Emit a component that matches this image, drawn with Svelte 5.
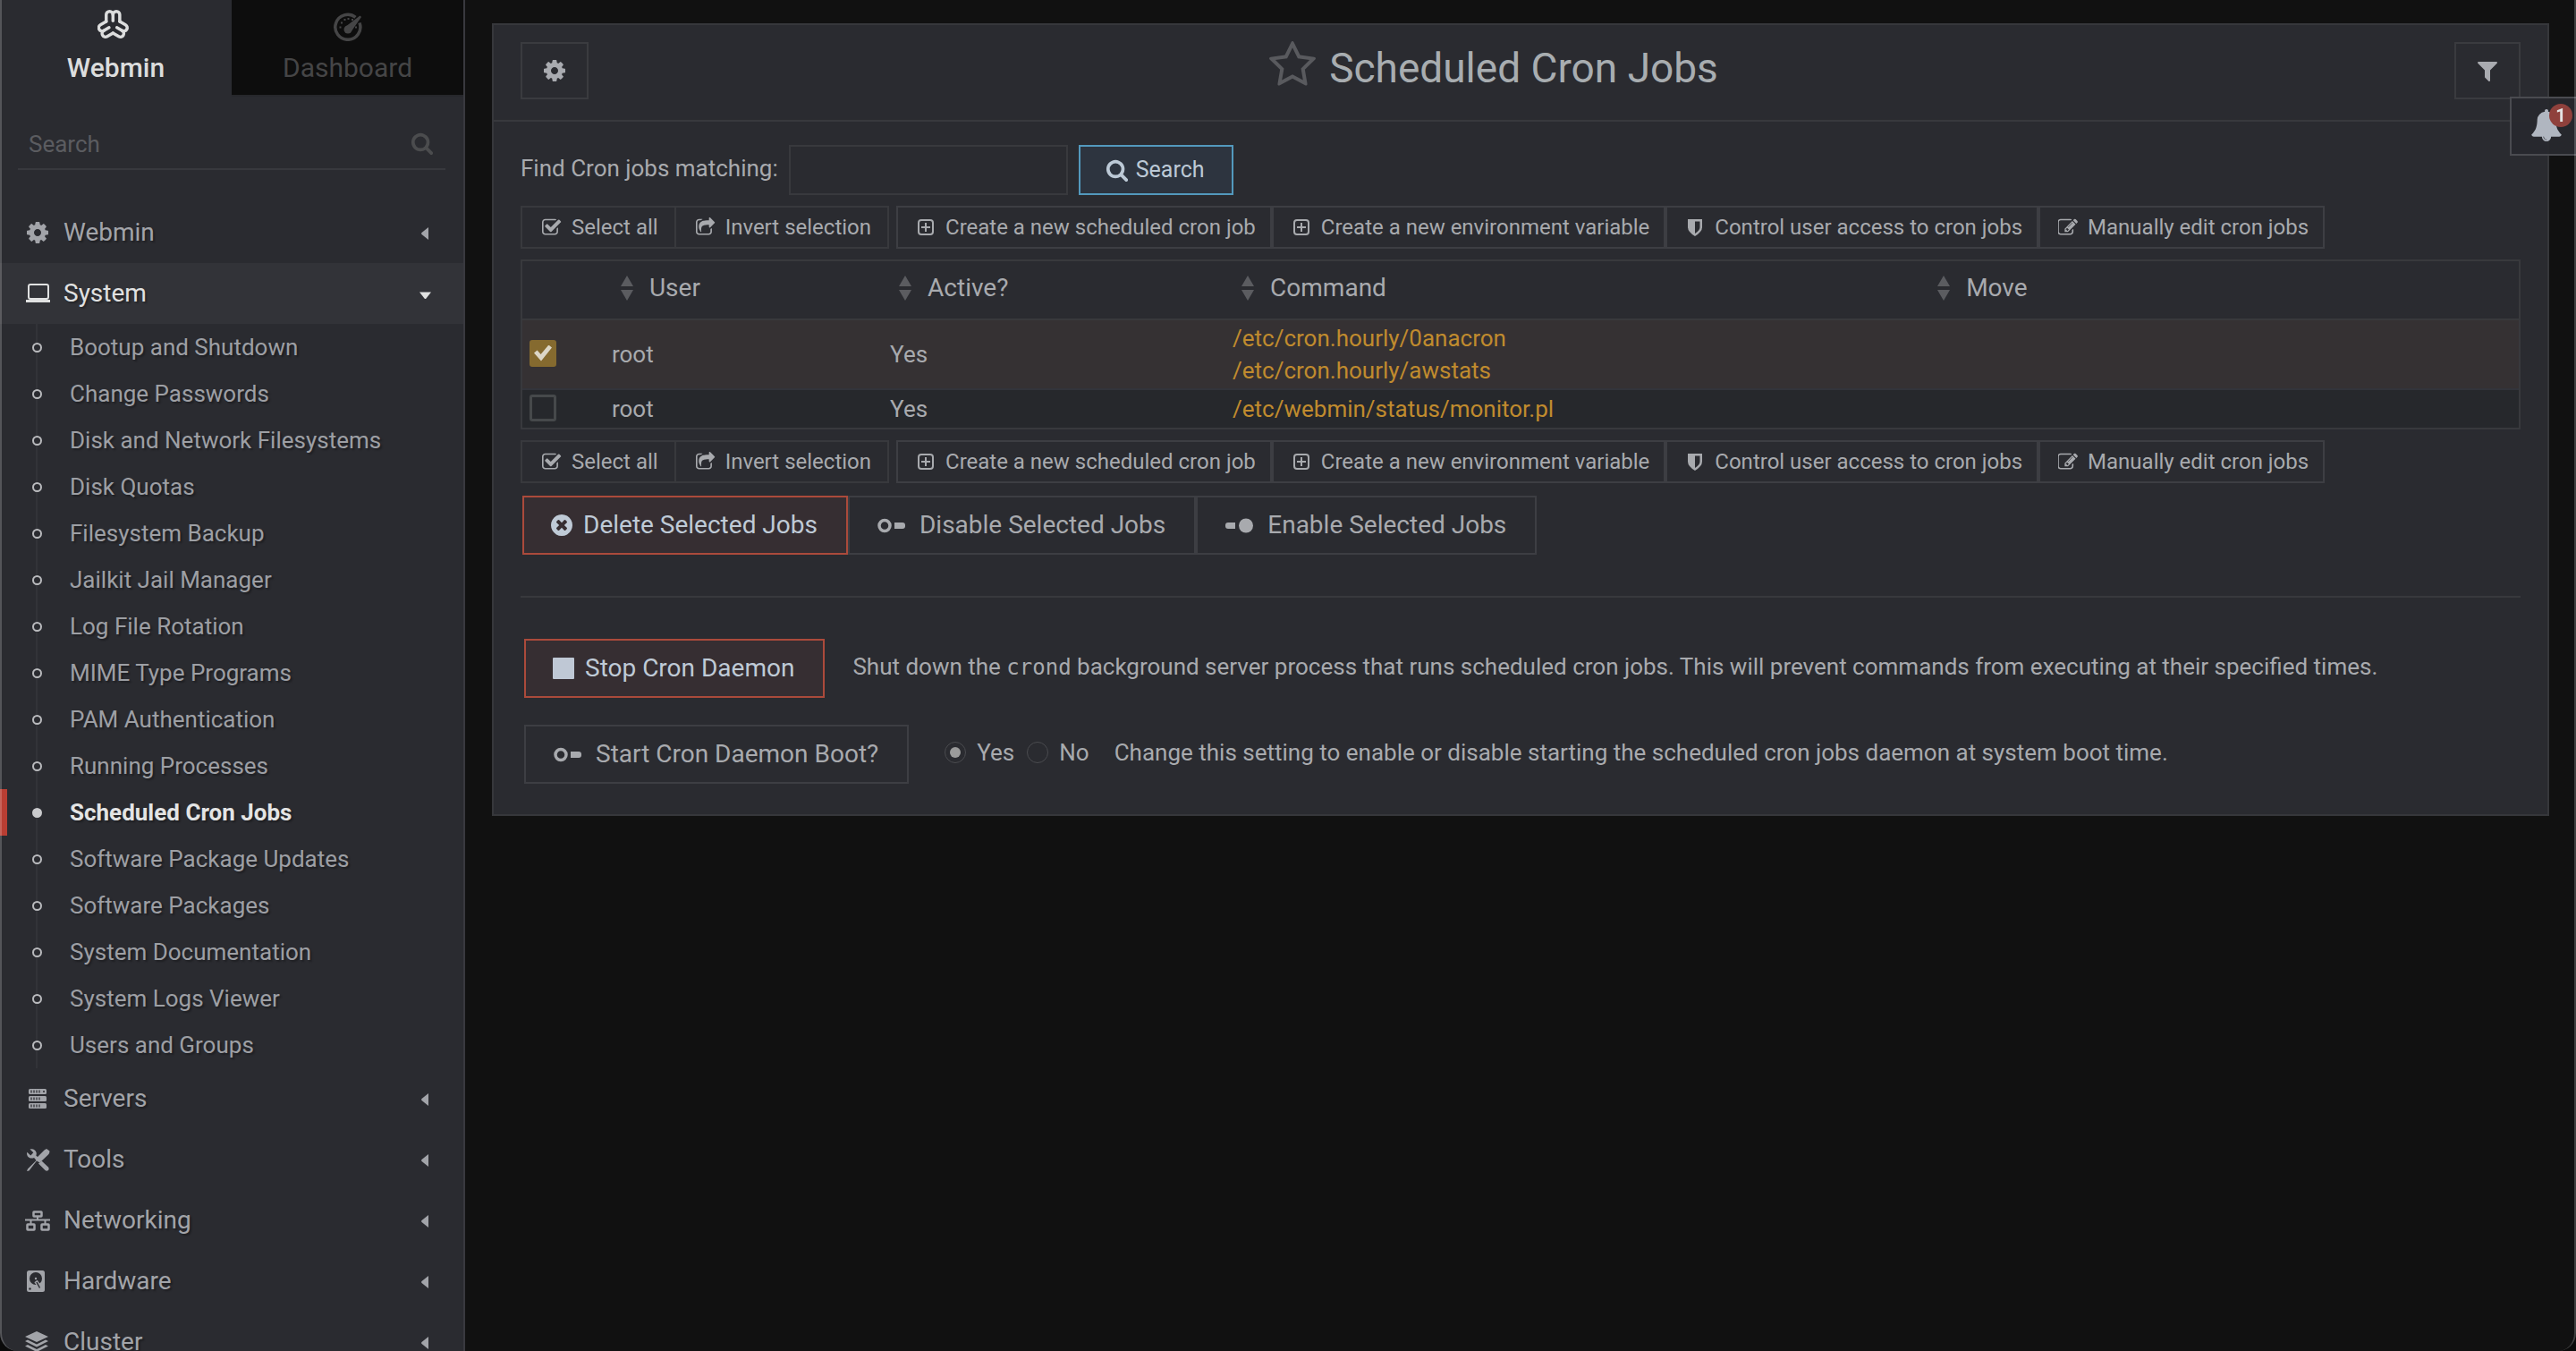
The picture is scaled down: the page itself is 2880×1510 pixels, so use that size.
<script>
  const cog = 'M1152 896q0-106-75-181t-181-75-181 75-75 181 75 181 181 75 181-75 75-181zm512-109v222q0 12-8 23t-20 13l-185 28q-19 54-39 91 35 50 107 138 10 12 10 25t-9 23q-27 37-99 108t-94 71q-12 0-26-9l-138-108q-44 23-91 38-16 136-29 186-7 28-36 28h-222q-14 0-24.5-8.5t-11.5-21.5l-28-184q-49-16-90-37l-141 107q-10 9-25 9-14 0-25-11-126-114-165-168-7-10-7-23 0-12 8-23 15-21 51-66.5t54-70.5q-27-50-41-99l-183-27q-13-2-21-12.5t-8-23.5v-222q0-12 8-23t19-13l186-28q14-46 39-92-40-57-107-138-10-12-10-24 0-10 9-23 26-36 98.500-107.500t94.500-71.500q13 0 26 10l138 107q44-23 91-38 16-136 29-186 7-28 36-28h222q14 0 24.500 8.500t11.500 21.500l28 184q49 16 90 37l142-107q9-9 24-9 13 0 25 10 129 119 165 170 7 8 7 22 0 12-8 23-15 21-51 66.500t-54 70.500q26 50 41 98l183 28q13 2 21 12.500t8 23.500z';
  const glyphs = {
    cog,
    filter: 'M1595 295q17 41-14 70l-493 493v742q0 42-39 59-13 5-25 5-27 0-45-19l-256-256q-19-19-19-45v-486l-493-493q-31-29-14-70 17-39 59-39h1280q42 0 59 39z',
    star: 'M1201 1004l306-297-422-62-189-382-189 382-422 62 306 297-73 421 378-199 377 199zm527-357q0 22-26 48l-363 354 86 500q1 7 1 20 0 50-41 50-19 0-40-12l-449-236-449 236q-22 12-40 12-21 0-31.5-14.5t-10.5-35.5q0-6 2-20l86-500-364-354q-25-27-25-48 0-37 56-46l502-73 225-455q19-41 49-41t49 41l225 455 502 73q56 9 56 46z',
    search: 'M1216 832q0-185-131.5-316.5t-316.5-131.5-316.5 131.5-131.5 316.5 131.5 316.5 316.5 131.5 316.5-131.5 131.5-316.5zm512 832q0 52-38 90t-90 38q-54 0-90-38l-343-342q-179 124-399 124-143 0-273.5-55.5t-225-150-150-225-55.5-273.5 55.5-273.5 150-225 225-150 273.5-55.5 273.5 55.5 225 150 150 225 55.5 273.5q0 220-124 399l343 343q37 37 37 90z',
    remove: 'M1277 1122q0-26-19-45l-181-181 181-181q19-19 19-45 0-27-19-46l-90-90q-19-19-46-19-26 0-45 19l-181 181-181-181q-19-19-45-19-27 0-46 19l-90 90q-19 19-19 46 0 26 19 45l181 181-181 181q-19 19-19 45 0 27 19 46l90 90q19 19 46 19 26 0 45-19l181-181 181 181q19 19 45 19 27 0 46-19l90-90q19-19 19-46zm387-226q0 209-103 385.5t-279.5 279.5-385.5 103-385.5-103-279.5-279.5-103-385.5 103-385.5 279.5-279.5 385.5-103 385.5 103 279.5 279.5 103 385.5z',
    check: 'M1472 930v318q0 119-84.5 203.5t-203.5 84.5h-832q-119 0-203.5-84.5t-84.5-203.5v-832q0-119 84.5-203.5t203.5-84.5h832q63 0 117 25 15 7 18 23 3 17-9 29l-49 49q-10 10-23 10-3 0-9-2-23-6-45-6h-832q-66 0-113 47t-47 113v832q0 66 47 113t113 47h832q66 0 113-47t47-113v-254q0-13 9-22l64-64q10-10 23-10 6 0 12 3 20 8 20 29zm231-489l-814 814q-24 24-57 24t-57-24l-430-430q-24-24-24-57t24-57l110-110q24-24 57-24t57 24l263 263 647-647q24-24 57-24t57 24l110 110q24 24 24 57t-24 57z',
    share: 'M1472 989v259q0 119-84.5 203.5t-203.5 84.5h-832q-119 0-203.5-84.5t-84.5-203.5v-832q0-119 84.5-203.5t203.5-84.5h255q13 0 22.5 9.5t9.5 22.5q0 27-26 32-77 26-133 60-10 4-16 4h-112q-66 0-113 47t-47 113v832q0 66 47 113t113 47h832q66 0 113-47t47-113v-214q0-19 18-29 28-13 54-37 16-16 35-8 21 9 21 29zm237-496l-384 384q-18 19-45 19-12 0-25-5-39-17-39-59v-192h-160q-323 0-438 131-119 137-74 473 3 23-20 34-8 2-12 2-16 0-26-13-10-14-21-31t-39.5-68.5-49.5-99.5-38.5-114-17.5-122q0-49 3.5-91t14-90 28-88 47-81.5 68.500-74 94.500-61.500 124.500-48.500 159.500-30.500 196.500-11h160v-192q0-42 39-59 13-5 25-5 26 0 45 19l384 384q19 19 19 45t-19 45z',
    edit: 'M888 1184l116-116-152-152-116 116v56h96v96h56zm440-720q-16-16-33 1l-350 350q-17 17-1 33t33-1l350-350q17-17 1-33zm80 594v190q0 119-84.5 203.500t-203.500 84.500h-832q-119 0-203.500-84.500t-84.500-203.500v-832q0-119 84.500-203.500t203.500-84.500h832q63 0 117 25 15 7 18 23 3 17-9 29l-49 49q-14 14-32 8-23-6-45-6h-832q-66 0-113 47t-47 113v832q0 66 47 113t113 47h832q66 0 113-47t47-113v-126q0-13 9-22l64-64q15-15 35-7t20 29zm-96-738l288 288-672 672h-288v-288zm444 132l-92 92-288-288 92-92q28-28 68-28t68 28l152 152q28 28 28 68t-28 68z',
    bell: 'M912 1696q0-16-16-16-59 0-101.5-42.5t-42.5-101.5q0-16-16-16t-16 16q0 73 51.5 124.5t124.5 51.5q16 0 16-16zm816-288q0 52-38 90t-90 38h-448q0 106-75 181t-181 75-181-75-75-181h-448q-52 0-90-38t-38-90q50-42 91-88t85-119.5 74.5-158.5 50-206 19.5-260q0-152 117-282.5t307-158.5q-8-19-8-39 0-40 28-68t68-28 68 28 28 68q0 20-8 39 190 28 307 158.5t117 282.5q0 139 19.5 260t50 206 74.5 158.5 85 119.5 91 88z'
  };

  const systemItems = [
    'Bootup and Shutdown', 'Change Passwords', 'Disk and Network Filesystems', 'Disk Quotas',
    'Filesystem Backup', 'Jailkit Jail Manager', 'Log File Rotation', 'MIME Type Programs',
    'PAM Authentication', 'Running Processes', 'Scheduled Cron Jobs', 'Software Package Updates',
    'Software Packages', 'System Documentation', 'System Logs Viewer', 'Users and Groups'
  ];
  const current = 'Scheduled Cron Jobs';

  const menu = [
    { name: 'Webmin', icon: 'cog' },
    { name: 'System', icon: 'laptop', items: systemItems },
    { name: 'Servers', icon: 'servers' },
    { name: 'Tools', icon: 'tools' },
    { name: 'Networking', icon: 'network' },
    { name: 'Hardware', icon: 'disk' },
    { name: 'Cluster', icon: 'layers' }
  ];

  const selectActions = [
    { label: 'Select all', icon: 'check' },
    { label: 'Invert selection', icon: 'share' }
  ];
  const pageActions = [
    { label: 'Create a new scheduled cron job', icon: 'plus' },
    { label: 'Create a new environment variable', icon: 'plus' },
    { label: 'Control user access to cron jobs', icon: 'shield' },
    { label: 'Manually edit cron jobs', icon: 'edit' }
  ];

  const columns = ['User', 'Active?', 'Command', 'Move'];
  let jobs = $state([
    { user: 'root', active: 'Yes', commands: ['/etc/cron.hourly/0anacron', '/etc/cron.hourly/awstats'], picked: true },
    { user: 'root', active: 'Yes', commands: ['/etc/webmin/status/monitor.pl'], picked: false }
  ]);
  let boot = $state('yes');
</script>

{#snippet glyph(name, cls)}
  <svg class={cls} viewBox="0 0 1792 1792" aria-hidden="true"><path d={glyphs[name]} /></svg>
{/snippet}

{#snippet menuIcon(name)}
  {#if name === 'cog'}
    {@render glyph('cog', 'i28')}
  {:else}
    <svg class="i28" viewBox="0 0 28 28" aria-hidden="true">
      {#if name === 'laptop'}
        <rect x="4" y="4" width="22" height="16" rx="2" fill="none" stroke="currentColor" stroke-width="2" />
        <path d="M1 21h27v3H1z" />
      {:else if name === 'servers'}
        {#each [3, 11, 19] as y}
          <rect x="4" {y} width="20" height="6" rx="1.500" />
          <path d="M7 {y + 1.5}v3M10 {y + 1.5}v3M13 {y + 1.5}v3M16 {y + 1.5}v3" stroke="#2a2b30" stroke-width="1.200" />
        {/each}
        <circle cx="21" cy="6" r="1" fill="#2a2b30" />
      {:else if name === 'tools'}
        <path d="M5.500 2.500 9.300 6.300 6.300 9.500 2.300 5.700C1.300 9 3.500 12.500 7.500 12.500q1.500 0 2.500-.5l2.500 2.500 2.500-2.500L12.300 9.500Q13 8 12.700 6.500C12 3.500 9 1.500 5.500 2.500z" />
        <path d="M15 18.500 18.500 15.500 26 22.500Q27.500 24.500 26 26 24 27.500 22.500 26z" />
        <path d="M24 2 27.500 4.500Q27.500 7 26 8.500L16.500 17.500 13 15.500 4.500 26.500 2 27 3 24.500 12.500 15 11.500 13.500 21.500 3.500z" />
      {:else if name === 'network'}
        <path d="M0 13.500h29M14 9v5M6.500 14v4M22.500 14v4" stroke="currentColor" stroke-width="2" />
        <g fill="none" stroke="currentColor" stroke-width="2.500">
          <rect x="9.500" y="4.500" width="9" height="5" rx=".5" />
          <rect x="2.500" y="18.500" width="8" height="6" rx=".5" />
          <rect x="18.500" y="18.500" width="8" height="6" rx=".5" />
        </g>
      {:else if name === 'disk'}
        <rect x="2" y="2" width="20" height="24" rx="2.500" />
        <circle cx="12" cy="11" r="7" fill="#2a2b30" />
        <circle cx="12" cy="11" r="1.200" />
        <path d="M12 14 18 22" stroke="currentColor" stroke-width="4" />
        <path d="M13 15l3.500 6.500" stroke="#2a2b30" stroke-width="1.500" />
        <circle cx="5.500" cy="22.500" r="1.200" fill="#2a2b30" />
      {:else}
        <path d="M13 2 26 8 13 14 0 8zM0 13l3-1.500 10 5 10-5 3 1.500-13 6.500zM0 18.500 3 17l10 5 10-5 3 1.500L13 25z" />
      {/if}
    </svg>
  {/if}
{/snippet}

{#snippet smallIcon(name)}
  {#if name === 'plus'}
    <svg class="i22" viewBox="0 0 22 22" aria-hidden="true">
      <rect x="3" y="3" width="16" height="16" rx="3" fill="none" stroke="currentColor" stroke-width="2" />
      <path d="M11 6v10M6 11h10" stroke="currentColor" stroke-width="2" />
    </svg>
  {:else if name === 'shield'}
    <svg class="i22" viewBox="0 0 22 22" aria-hidden="true">
      <path d="M3 2h16v9q0 5-8 10-8-5-8-10zM11 4.500v13.500q5.500-3.500 5.500-7V4.500z" fill-rule="evenodd" />
    </svg>
  {:else}
    <svg class="i22" viewBox="64 0 1728 1728" aria-hidden="true"><path d={glyphs[name]} /></svg>
  {/if}
{/snippet}

{#snippet toggle(on)}
  <svg class="toggle" viewBox="0 0 36 24" aria-hidden="true">
    {#if on}
      <path d="M4 9h8v7H4a3 3 0 0 1-3-3v-1a3 3 0 0 1 3-3z" />
      <circle cx="24" cy="12.500" r="8" />
    {:else}
      <circle cx="9" cy="12.500" r="6" fill="none" stroke="currentColor" stroke-width="3.500" />
      <path d="M20 9h9a3 3 0 0 1 3 3v1a3 3 0 0 1-3 3h-9z" />
    {/if}
  </svg>
{/snippet}

{#snippet toolbar()}
  <div class="toolbar">
    <div class="group joined">
      {#each selectActions as a}
        <button class="small" type="button">{@render smallIcon(a.icon)}{a.label}</button>
      {/each}
    </div>
    <div class="group">
      {#each pageActions as a}
        <button class="small" type="button">{@render smallIcon(a.icon)}{a.label}</button>
      {/each}
    </div>
  </div>
{/snippet}

<div class="shell">
  <aside>
    <nav class="tabs">
      <a class="tab on" href="#webmin">
        <svg class="brand" viewBox="0 0 42 36" aria-hidden="true">
          <g transform="translate(17.300 18.300) scale(.91)" fill="none" stroke="currentColor" stroke-width="3.800" stroke-linecap="round" stroke-linejoin="round">
            {#each [0, 120, 240] as turn}
              <g transform="rotate({turn})">
                <path d="M-8.300-4.800V-13a4.150 4.150 0 0 1 8.300 0 4.150 4.150 0 0 1 8.300 0v8.200" />
                <path d="M0-13v7.500" />
              </g>
            {/each}
          </g>
        </svg>
        <span>Webmin</span>
      </a>
      <a class="tab" href="#dashboard">
        <svg class="gauge" viewBox="0 0 36 36" aria-hidden="true">
          <path d="M26.500 9.300A14 14 0 1 0 31 15.500" fill="none" stroke="currentColor" stroke-width="3.500" />
          <path d="M31.500 7.500 33 9 21.500 25.500 15 20z" />
          <circle cx="18" cy="23" r="4.500" />
          <path d="M8.500 20.500h2M10 15.500h2M13.500 12h2M17.500 11h2M22 12h2M26 20.500h2" stroke="currentColor" stroke-width="2" />
        </svg>
        <span>Dashboard</span>
      </a>
    </nav>
    <form class="find-menu">
      <input type="text" placeholder="Search" aria-label="Search" />
      {@render glyph('search', 'i26')}
    </form>
    <nav class="menu">
      {#each menu as entry}
        <a class="entry" class:open={entry.items} href="#{entry.name}">
          {@render menuIcon(entry.icon)}
          <span>{entry.name}</span>
          <svg class="caret" viewBox="0 0 14 14" aria-hidden="true">
            <path d={entry.items ? 'M1 4.500h13l-5.500 7q-1 1-2 0z' : 'M11 0v14L3.500 8q-1-1 0-2z'} />
          </svg>
        </a>
        {#if entry.items}
          <ul>
            {#each entry.items as item}
              <li class:current={item === current}><a href="#{item}">{item}</a></li>
            {/each}
          </ul>
        {/if}
      {/each}
    </nav>
  </aside>

  <main>
    <section class="panel">
      <header>
        <button class="square" type="button" aria-label="Module configuration">{@render glyph('cog', 'i28')}</button>
        <div class="title">
          {@render glyph('star', 'i56')}
          <h1>Scheduled Cron Jobs</h1>
        </div>
        <button class="square filter" type="button" aria-label="Filter">{@render glyph('filter', 'i28')}</button>
      </header>

      <div class="body">
        <form class="find">
          <label for="match">Find Cron jobs matching:</label>
          <input id="match" type="text" />
          <button class="go" type="button">{@render glyph('search', 'i26')}Search</button>
        </form>

        {@render toolbar()}

        <table>
          <colgroup><col class="c1" /><col class="c2" /><col class="c3" /><col class="c4" /><col class="c5" /></colgroup>
          <thead>
            <tr>
              <th></th>
              {#each columns as c}
                <th><span class="sort"><svg viewBox="0 0 14 28" aria-hidden="true"><path d="M7 0l7 12H0zM0 16h14L7 28z" /></svg>{c}</span></th>
              {/each}
            </tr>
          </thead>
          <tbody>
            {#each jobs as job}
              <tr class:picked={job.picked}>
                <td class="pick"><input type="checkbox" bind:checked={job.picked} aria-label={job.commands[0]} /></td>
                <td>{job.user}</td>
                <td>{job.active}</td>
                <td>
                  {#each job.commands as cmd}
                    <a href="#{cmd}">{cmd}</a>
                  {/each}
                </td>
                <td></td>
              </tr>
            {/each}
          </tbody>
        </table>

        {@render toolbar()}

        <div class="bulk">
          <button class="big danger" type="button">{@render glyph('remove', 'i28 tight')}Delete Selected Jobs</button>
          <button class="big" type="button">{@render toggle(false)}Disable Selected Jobs</button>
          <button class="big" type="button">{@render toggle(true)}Enable Selected Jobs</button>
        </div>

        <hr />

        <div class="daemon">
          <button class="big danger" type="button"><i class="stop"></i>Stop Cron Daemon</button>
          <p>Shut down the <code>crond</code> background server process that runs scheduled cron jobs. This will prevent commands from executing at their specified times.</p>
        </div>
        <div class="daemon boot">
          <button class="big" type="button">{@render toggle(false)}Start Cron Daemon Boot?</button>
          <div class="choice">
            <label><input type="radio" name="boot" value="yes" bind:group={boot} />Yes</label>
            <label><input type="radio" name="boot" value="no" bind:group={boot} />No</label>
            <p>Change this setting to enable or disable starting the scheduled cron jobs daemon at system boot time.</p>
          </div>
        </div>
      </div>
    </section>
  </main>

  <button class="alerts" type="button" aria-label="Notifications">
    {@render glyph('bell', 'i36')}
    <span>1</span>
  </button>
  <div class="edge"></div>
</div>

<style>
  :global(body) {
    background: #111;
  }
  .shell {
    display: flex;
    height: 100vh;
    overflow: hidden;
    background: #111;
    color: #a8aaae;
    font-family: Roboto, sans-serif;
    font-size: 26px;
    line-height: 36px;
  }
  .shell *,
  .shell *::before {
    box-sizing: border-box;
  }
  a {
    color: inherit;
    text-decoration: none;
  }
  button,
  input {
    font: inherit;
    color: inherit;
    margin: 0;
    border-radius: 0;
  }
  svg {
    display: block;
    flex: none;
    fill: currentColor;
  }
  :global(svg.i28) {
    width: 28px;
    height: 28px;
  }
  :global(svg.tight) {
    margin: 0 -2px;
  }
  :global(svg.i26) {
    width: 26px;
    height: 26px;
  }
  :global(svg.i36) {
    width: 36px;
    height: 36px;
  }
  :global(svg.i56) {
    width: 56px;
    height: 56px;
    margin-bottom: 6px;
    color: #595a5e;
  }
  .i22 {
    width: 22px;
    height: 22px;
  }

  aside {
    flex: none;
    width: 520px;
    overflow: hidden;
    background: #2a2b30;
    border-right: 2px solid #39393f;
  }
  .tabs {
    display: grid;
    grid-template-columns: 1fr 1fr;
  }
  .tab {
    display: flex;
    flex-direction: column;
    align-items: center;
    gap: 12px;
    height: 108px;
    padding-top: 10px;
    background: #0d0d0d;
    border-bottom: 2px solid #26272b;
    color: #454546;
    font-size: 30px;
  }
  .tab.on {
    background: none;
    border-color: transparent;
    color: #dcdddd;
    font-weight: 500;
  }
  .brand {
    width: 42px;
    height: 36px;
  }
  .gauge {
    width: 36px;
    height: 36px;
  }
  .find-menu {
    display: flex;
    align-items: center;
    margin: 24px 20px 36px;
    padding: 0 13px 0 12px;
    border-bottom: 2px solid #38393e;
    color: #4b4c4e;
  }
  .find-menu input {
    flex: 1;
    min-width: 0;
    height: 56px;
    padding: 2px 0 0;
    border: 0;
    background: none;
    outline: none;
  }
  .find-menu input::placeholder {
    color: #5b5c60;
    opacity: 1;
  }
  .entry {
    display: flex;
    align-items: center;
    gap: 15px;
    height: 68px;
    padding: 0 36px 0 28px;
    color: #a2a4a9;
    font-size: 28px;
    text-shadow: 2px 2px 2px rgba(0, 0, 0, 0.3);
  }
  .entry span {
    flex: 1;
  }
  .entry.open {
    background: #323338;
    color: #e0e1e1;
  }
  .caret {
    width: 14px;
    height: 14px;
    margin-top: 2px;
  }
  ul {
    position: relative;
    list-style: none;
    margin: 0;
    padding: 0;
  }
  ul::before {
    content: '';
    position: absolute;
    top: 0;
    bottom: 0;
    left: 40px;
    width: 2px;
    background: #323338;
  }
  li {
    position: relative;
    display: flex;
    align-items: center;
    gap: 31px;
    height: 52px;
    padding-left: 36px;
    color: #9d9fa4;
    text-shadow: 2px 2px 2px rgba(0, 0, 0, 0.3);
  }
  li::before {
    content: '';
    width: 11px;
    height: 11px;
    border: 2px solid #b9babd;
    border-radius: 50%;
    background: #2a2b30;
  }
  li.current {
    color: #e3e4e4;
    font-weight: 700;
    border-left: 8px solid #b93e33;
    padding-left: 28px;
  }
  li.current::before {
    background: #c9cacc;
    border-color: #c9cacc;
  }

  main {
    flex: 1;
    min-width: 0;
    padding: 26px 30px;
  }
  .panel {
    background: #2a2b30;
    border: 2px solid #36373b;
  }
  header {
    display: flex;
    align-items: center;
    padding: 19px 30px 23px;
    border-bottom: 2px solid #38393d;
  }
  .square {
    display: grid;
    place-items: center;
    width: 76px;
    height: 64px;
    padding: 0;
    background: none;
    border: 2px solid #3a3b3f;
    color: #a9abb0;
  }
  .filter {
    width: 74px;
  }
  .title {
    flex: 1;
    display: flex;
    align-items: center;
    justify-content: center;
    gap: 13px;
    padding: 0 64px 6px 0;
    height: 64px;
  }
  h1 {
    margin: 0;
    font-size: 46px;
    line-height: 56px;
    font-weight: 400;
    color: #a8adb0;
  }
  .body {
    padding: 26px 30px 34px;
  }
  .find {
    display: flex;
    align-items: center;
  }
  .find label {
    padding-bottom: 4px;
  }
  .find input {
    width: 312px;
    height: 56px;
    margin: 0 12px;
    padding: 0 12px;
    background: none;
    border: 2px solid #38393d;
    outline: none;
  }
  .go {
    display: flex;
    align-items: center;
    gap: 8px;
    height: 56px;
    padding: 0 30px 0 28px;
    background: #2d343f;
    border: 2px solid #5399bd;
    color: #bcc9d6;
    font-size: 25px;
  }
  .toolbar {
    display: flex;
    flex-wrap: wrap;
    gap: 8px;
    margin: 12px 0;
  }
  .group {
    display: flex;
    flex-wrap: wrap;
  }
  .small {
    display: flex;
    align-items: center;
    gap: 11px;
    height: 48px;
    padding: 0 16px 0 20px;
    background: none;
    border: 2px solid #3d3e43;
    font-size: 24px;
  }
  .joined .small {
    padding: 0 18px 0 22px;
    border-color: #38393d;
  }
  .joined .small + .small {
    margin-left: -2px;
  }

  table {
    width: 100%;
    table-layout: fixed;
    border-collapse: separate;
    border-spacing: 0;
    border: 2px solid #38393d;
  }
  .c1 {
    width: 4.12%;
  }
  .c2 {
    width: 13.94%;
  }
  .c3 {
    width: 17.16%;
  }
  .c4 {
    width: 34.86%;
  }
  th {
    height: 66px;
    padding: 0 0 4px 18px;
    border-bottom: 2px solid #38393c;
    font-size: 28px;
    font-weight: 400;
    text-align: left;
  }
  .sort {
    display: flex;
    align-items: center;
    gap: 18px;
  }
  .sort svg {
    width: 14px;
    height: 28px;
    color: #5b5c60;
  }
  td {
    height: 42px;
    padding: 2px 8px;
    background: #26282c;
    vertical-align: middle;
  }
  td a {
    display: block;
    color: #c08b2e;
  }
  .picked td {
    background: #353133;
    border-bottom: 2px solid #32343b;
  }
  td.pick {
    padding: 0 8px 3px;
    line-height: 0;
  }
  input[type='checkbox'] {
    appearance: none;
    display: grid;
    place-items: center;
    width: 30px;
    height: 30px;
    border: 3px solid #46494b;
    border-radius: 3px;
  }
  input[type='checkbox']:checked {
    background: #856a2f;
    border-color: #856a2f;
  }
  input[type='checkbox']:checked::before {
    content: '';
    width: 20px;
    height: 18px;
    background: #dcd6c6;
    clip-path: polygon(0 50%, 18% 34%, 38% 58%, 82% 0, 100% 16%, 40% 100%);
  }

  .bulk {
    display: flex;
    flex-wrap: wrap;
    margin: 14px 2px 46px;
  }
  .big {
    display: flex;
    flex: none;
    align-items: center;
    gap: 12px;
    height: 66px;
    padding: 0 32px 0 30px;
    background: none;
    border: 2px solid #3d3e43;
    font-size: 28px;
  }
  .danger {
    background: #362e32;
    border-color: #ab4a3b;
    color: #bfcad6;
  }
  .toggle {
    width: 36px;
    height: 24px;
  }
  .stop {
    width: 24px;
    height: 24px;
    border-radius: 1px;
    background: #bfc8d5;
  }
  hr {
    height: 2px;
    margin: 0 0 46px;
    border: 0;
    background: #38393d;
  }
  .daemon {
    display: flex;
    align-items: center;
    gap: 31px;
    margin-left: 4px;
  }
  .boot {
    gap: 40px;
    margin-top: 30px;
  }
  p {
    margin: 0;
    padding-bottom: 4px;
  }
  code {
    font-family: 'DejaVu Sans Mono', monospace;
    font-size: 24px;
  }
  .choice {
    display: flex;
    align-items: center;
    gap: 14px;
  }
  .choice p {
    margin-left: 14px;
  }
  .choice label {
    display: flex;
    align-items: center;
    gap: 12px;
    padding-bottom: 4px;
  }
  input[type='radio'] {
    appearance: none;
    display: grid;
    place-items: center;
    width: 24px;
    height: 24px;
    border: 1px solid #4a4b4f;
    border-radius: 50%;
  }
  input[type='radio']:checked::before {
    content: '';
    width: 12px;
    height: 12px;
    border-radius: 50%;
    background: #9b9b9b;
  }

  .alerts {
    position: fixed;
    top: 108px;
    right: 0;
    display: grid;
    place-items: center;
    width: 74px;
    height: 66px;
    padding: 0 0 2px 6px;
    background: rgba(40, 41, 46, 0.96);
    border: 2px solid #4a4b50;
    border-right: 0;
    color: #b0b6c0;
  }
  .alerts span {
    position: absolute;
    top: 6px;
    right: 4px;
    width: 26px;
    height: 26px;
    border-radius: 50%;
    background: #8f413c;
    color: #e4e4e4;
    font-size: 20px;
    font-weight: 700;
    line-height: 26px;
    text-align: center;
  }
  .edge {
    position: fixed;
    inset: 0;
    pointer-events: none;
    border: solid rgba(255, 255, 255, 0.2);
    border-width: 0 2px;
    border-radius: 0 0 20px 20px;
    box-shadow: 0 0 0 20px #0a0a0a;
  }
</style>
